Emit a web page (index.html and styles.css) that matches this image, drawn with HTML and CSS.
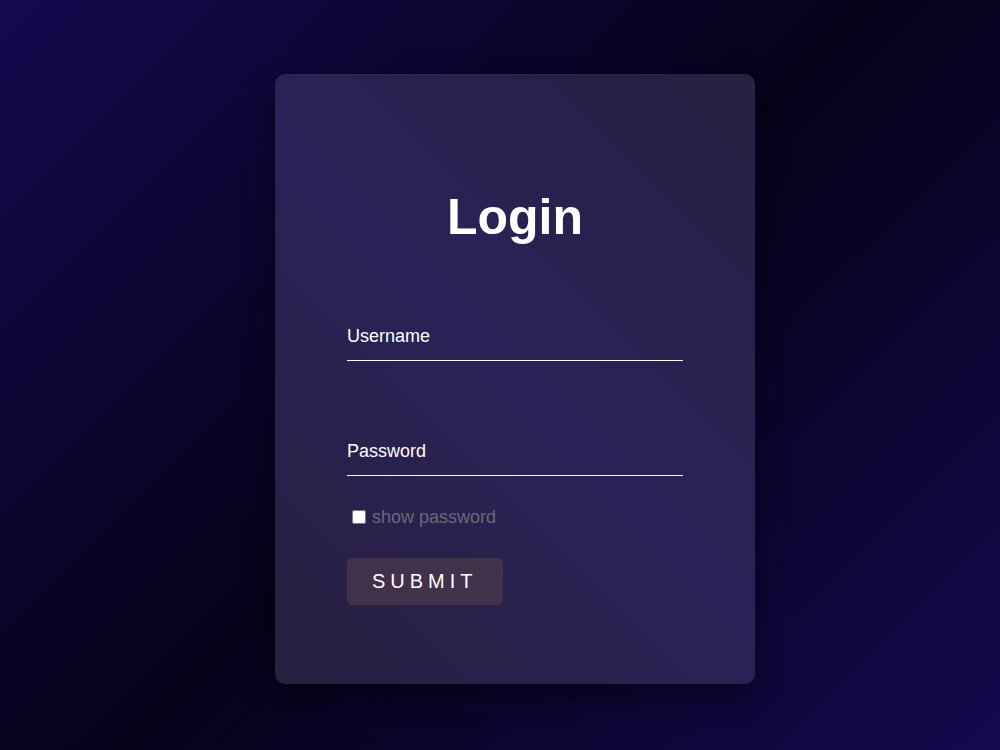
FILE: index.html
```html
<!DOCTYPE html>
<html lang="en">
<head>
<meta charset="utf-8">
<title>Login</title>
<link rel="stylesheet" href="styles.css">
</head>
<body>
<main class="stage">
  <form class="card">
    <h1 class="title">Login</h1>
    <input class="field field-user" type="text" placeholder="Username">
    <input class="field field-pass" type="password" placeholder="Password">
    <label class="show"><input class="show-box" type="checkbox"> show password</label>
    <button class="submit" type="button">SUBMIT</button>
  </form>
</main>
</body>
</html>
```
FILE: styles.css
```css
html, body {
  margin: 0;
  height: 100%;
}
body {
  background: linear-gradient(135deg, #130a4e 0%, #0b0530 28%, #05021a 50%, #0b0530 72%, #130a4e 100%);
  font-family: "Liberation Sans", Arial, sans-serif;
  color: #fff;
}
.stage {
  box-sizing: border-box;
  min-height: 100vh;
  display: flex;
  justify-content: center;
  align-items: center;
  padding: 8px 0 0 30px;
}
.card {
  width: 480px;
  box-sizing: border-box;
  padding: 115px 72px 79px;
  border-radius: 10px;
  background: linear-gradient(45deg, #27203f 0%, #2a2257 50%, #262042 100%);
  box-shadow: 0 12px 30px rgba(0, 0, 0, 0.45);
  display: flex;
  flex-direction: column;
  align-items: flex-start;
}
.title {
  align-self: stretch;
  margin: 0 0 79px;
  font-size: 50px;
  line-height: 56px;
  font-weight: bold;
  text-align: center;
}
.field {
  display: block;
  width: 100%;
  box-sizing: content-box;
  margin: 0;
  padding: 0 0 12px;
  height: 24px;
  line-height: 24px;
  border: none;
  border-bottom: 1px solid #fff;
  background: transparent;
  color: #fff;
  font-family: "Liberation Sans", Arial, sans-serif;
  font-size: 18px;
  outline: none;
}
.field::placeholder {
  color: #fff;
  opacity: 1;
}
.field-user {
  margin-bottom: 78px;
}
.field-pass {
  margin-bottom: 30px;
}
.show {
  display: flex;
  align-items: center;
  height: 22px;
  line-height: 22px;
  font-size: 18px;
  color: #6c6a74;
  margin-bottom: 30px;
  white-space: pre;
}
.show-box {
  width: 14px;
  height: 14px;
  margin: 0 1px 0 5px;
}
.submit {
  height: 47px;
  padding: 0 25px;
  border: none;
  border-radius: 5px;
  background: #42314a;
  color: #fff;
  font-family: "Liberation Sans", Arial, sans-serif;
  font-size: 20px;
  letter-spacing: 5px;
}
```
